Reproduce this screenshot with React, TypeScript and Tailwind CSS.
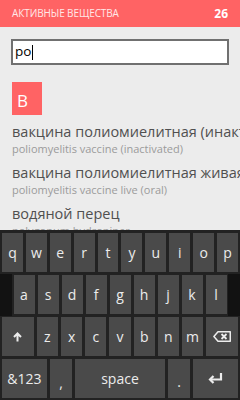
import type { ReactNode } from "react";

const items = [
  { title: "вакцина полиомиелитная (инактивированная)", sub: "poliomyelitis vaccine (inactivated)" },
  { title: "вакцина полиомиелитная живая", sub: "poliomyelitis vaccine live (oral)" },
  { title: "водяной перец", sub: "polygonum hydropiper" },
];

function Key({ children, className = "" }: { children: ReactNode; className?: string }) {
  return (
    <div
      className={`flex h-full items-center justify-center bg-[#4a4a4a] text-[14px] text-[#ececec] ${className}`}
    >
      {children}
    </div>
  );
}

function ShiftIcon() {
  return (
    <svg width="9" height="10" viewBox="0 0 9 10" fill="none">
      <path d="M4.5 9.5V2M1 5l3.5-3.5L8 5" stroke="#ececec" strokeWidth="2" />
    </svg>
  );
}

function BackspaceIcon() {
  return (
    <svg width="18" height="11" viewBox="0 0 18 11" fill="none">
      <path d="M5 0.75h12.25v9.5H5L0.9 5.5z" stroke="#ececec" strokeWidth="1.5" strokeLinejoin="round" />
      <path d="M8.5 3l5 5M13.5 3l-5 5" stroke="#ececec" strokeWidth="1.8" />
    </svg>
  );
}

function EnterIcon() {
  return (
    <svg width="15" height="11" viewBox="0 0 15 11" fill="none">
      <path d="M13 0v6.5H3" stroke="#ececec" strokeWidth="2.2" />
      <path d="M5.5 3L2 6.5 5.5 10" stroke="#ececec" strokeWidth="2.2" />
    </svg>
  );
}

export default function App() {
  return (
    <div
      className="relative flex h-[400px] w-[240px] flex-col overflow-hidden bg-[#ececec]"
      style={{ fontFamily: '"Open Sans", "Noto Sans", sans-serif' }}
    >
      <header className="flex h-[27px] shrink-0 items-center justify-between bg-[#ff6364] pl-3 pr-3">
        <span className="text-[10px] tracking-[-0.1px] text-[#ffe8e8]">АКТИВНЫЕ ВЕЩЕСТВА</span>
        <span className="text-[12px] font-bold text-white">26</span>
      </header>

      <div className="px-[11px] pt-[12px]">
        <div className="flex h-[26px] items-center border-2 border-[#707070] bg-white pl-[2px]">
          <span className="text-[13.5px] leading-none text-black">po</span>
          <span className="ml-[1px] h-[15px] w-px bg-black" />
        </div>

        <div className="mt-[17px] ml-px flex h-[33px] w-[30px] items-end bg-[#ff6364] pb-[6px] pl-[5px]">
          <span className="text-[17px] leading-none text-white">В</span>
        </div>

        <ul className="mt-[7px] ml-px">
          {items.map((it) => (
            <li key={it.sub} className="flex h-[41px] flex-col">
              <span className="whitespace-nowrap text-[14.5px] leading-[20px] text-[#505050]">{it.title}</span>
              <span className="whitespace-nowrap text-[11px] leading-[14px] text-[#9b9b9b]">{it.sub}</span>
            </li>
          ))}
        </ul>
      </div>

      <div className="absolute bottom-0 left-0 flex h-[170px] w-[240px] flex-col gap-[3px] bg-[#222] pt-[3px]">
        <div className="grid h-[39px] grid-cols-10 gap-[3px] px-[2px]">
          {"qwertyuiop".split("").map((k) => (
            <Key key={k}>{k}</Key>
          ))}
        </div>
        <div className="-my-[1.5px] flex h-[42px] py-[1.5px]">
          <div className="-my-[1.5px] w-[12px] bg-[#121212]" />
          <div className="grid flex-1 grid-cols-9 gap-[3px] px-[1.5px]">
            {"asdfghjkl".split("").map((k) => (
              <Key key={k}>{k}</Key>
            ))}
          </div>
          <div className="-my-[1.5px] w-[12px] bg-[#121212]" />
        </div>
        <div className="grid h-[39px] grid-cols-[3fr_2fr_2fr_2fr_2fr_2fr_2fr_2fr_3fr] gap-[3px] px-[2px]">
          <Key>
            <ShiftIcon />
          </Key>
          {"zxcvbnm".split("").map((k) => (
            <Key key={k}>{k}</Key>
          ))}
          <Key>
            <BackspaceIcon />
          </Key>
        </div>
        <div className="grid h-[39px] grid-cols-[2fr_1fr_4fr_1fr_2fr] gap-[3px] px-[2px]">
          <Key className="text-[12px]">&amp;123</Key>
          <Key className="pt-[8px]">,</Key>
          <Key className="text-[13px]">space</Key>
          <Key className="pt-[6px]">.</Key>
          <Key>
            <EnterIcon />
          </Key>
        </div>
      </div>
    </div>
  );
}
